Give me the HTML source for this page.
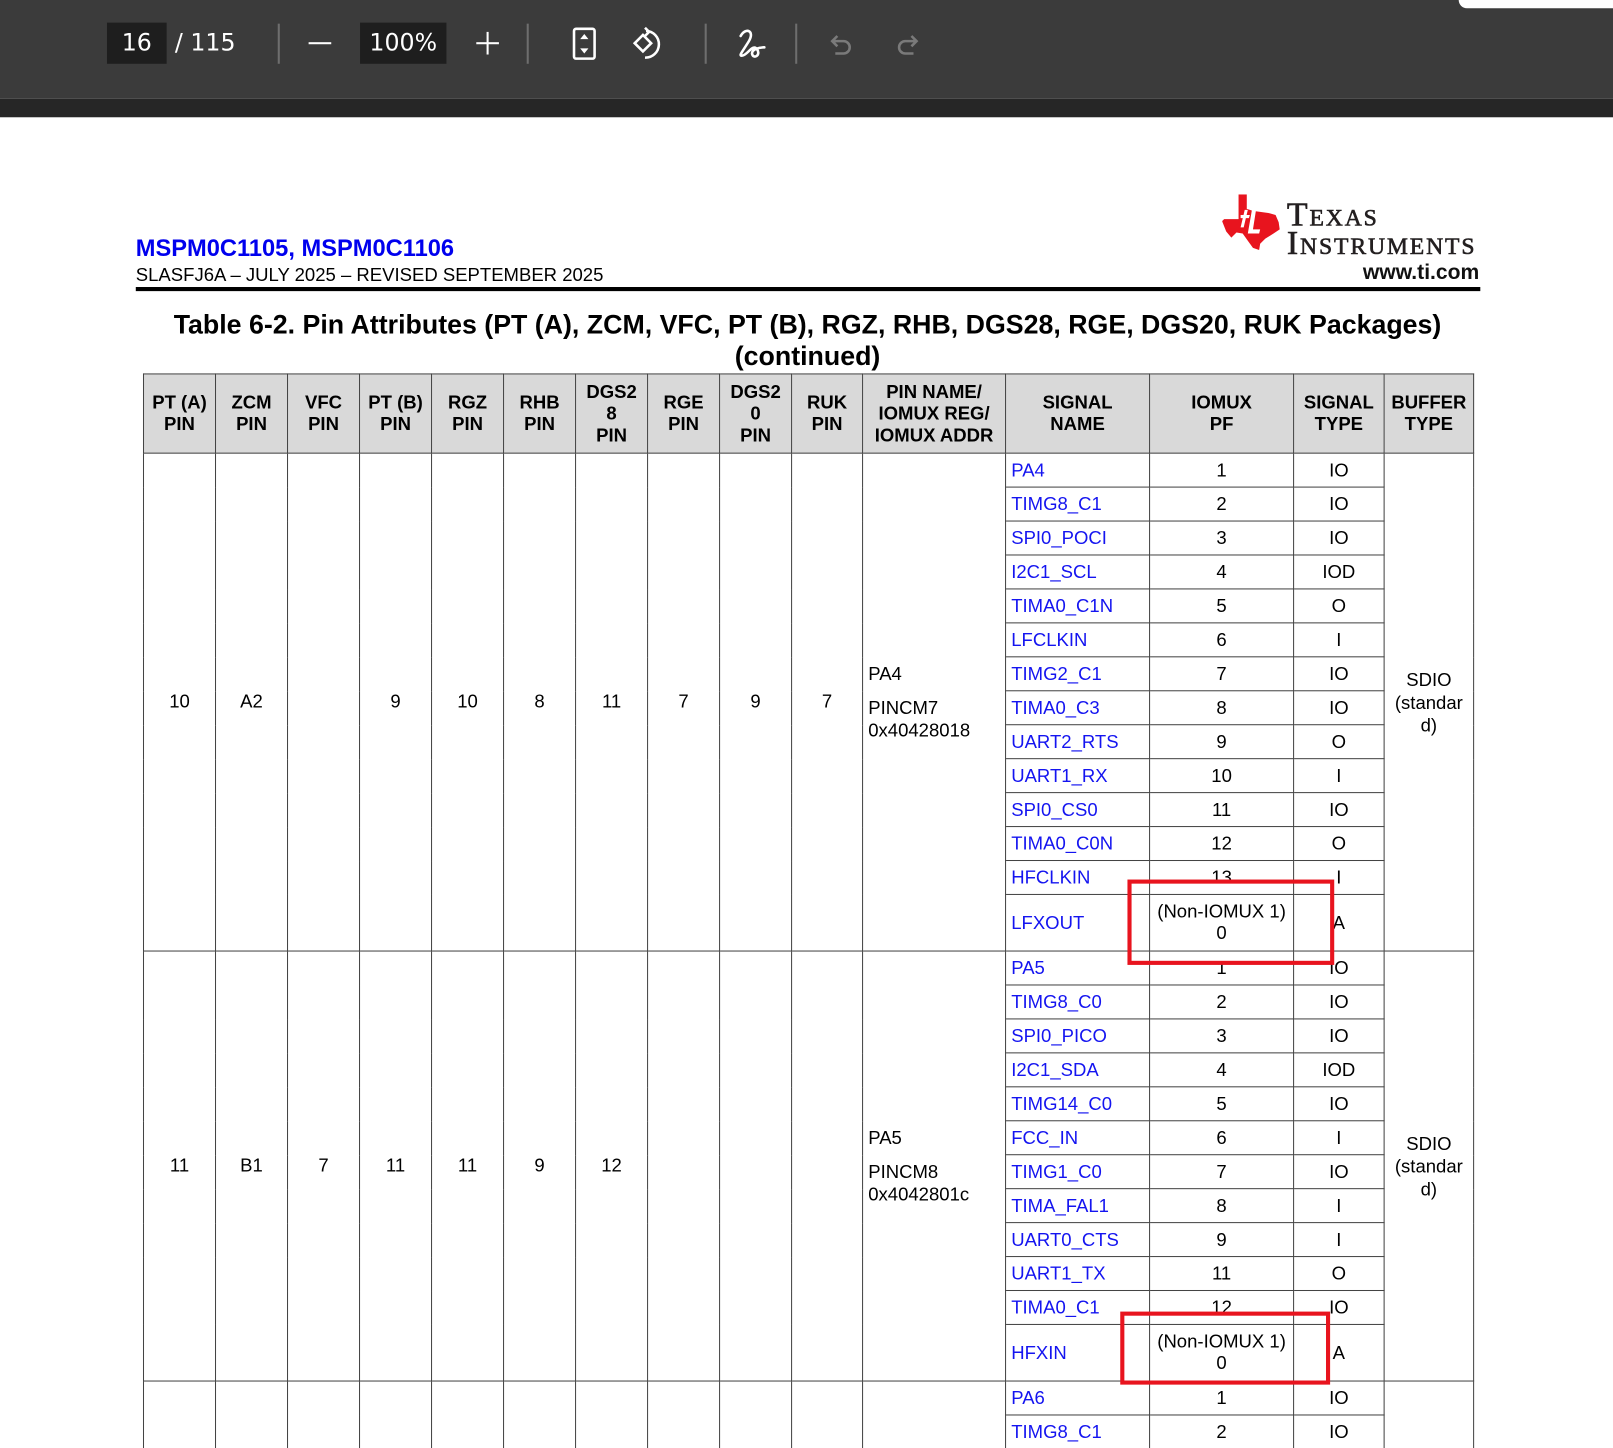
<!DOCTYPE html>
<html><head><meta charset="utf-8">
<style>
html,body{margin:0;padding:0;background:#fff;width:1613px;height:1448px;overflow:hidden}
#w{position:absolute;left:0;top:0;width:1568px;height:1408px;transform:scale(1.02870);transform-origin:0 0;overflow:hidden;font-family:"Liberation Sans",Arial,sans-serif;background:#fff}
.a{position:absolute}
.tb{left:0;top:0;width:1568px;height:96px;background:#3b3b3b}
.tb2{left:0;top:96px;width:1568px;height:18px;background:#262626}
.box{background:#1e1e1e;color:#fff;font-family:"DejaVu Sans",sans-serif;font-size:23px;text-align:center;line-height:40px;top:22px;height:40px}
.sep{width:2px;background:#6e6e6e;top:23px;height:39px}
.tx{color:#fff;font-family:"DejaVu Sans",sans-serif;font-size:23px;line-height:40px;top:22px}
table{position:absolute;left:139px;top:363px;border-collapse:collapse;table-layout:fixed;font-size:18px;color:#000}
td{border:1px solid #444;padding:0;text-align:center;vertical-align:middle;overflow:hidden;white-space:nowrap}
th{border:1px solid #444;background:#d9d9d9;font-weight:bold;font-size:18px;line-height:21px;padding:0}
thead tr{height:77px}
tr.r{height:33px}
tr.t{height:55px}
td.s{text-align:left;padding-left:5px;color:#1414f0}
td.pn{text-align:left;padding-left:5px;line-height:22px}
td.bf{line-height:22px}
.red{border:4px solid #e8141e;box-sizing:border-box}
</style></head><body><div id="w">
<div class="a tb"></div><div class="a tb2"></div>
<div class="a" style="left:1418px;top:0;width:160px;height:8px;background:#fff;border-radius:0 0 0 10px"></div>
<div class="a box" style="left:104px;width:58px">16</div>
<div class="a tx" style="left:170px">/ 115</div>
<div class="a sep" style="left:270px"></div>
<div class="a" style="left:300px;top:41px;width:22px;height:2px;background:#fff"></div>
<div class="a box" style="left:350px;width:84px">100%</div>
<div class="a" style="left:463px;top:41px;width:22px;height:2px;background:#fff"></div>
<div class="a" style="left:473px;top:31px;width:2px;height:22px;background:#fff"></div>
<div class="a sep" style="left:512px"></div>
<svg class="a" style="left:550px;top:20px" width="360" height="46" viewBox="0 0 360 46">
<rect x="8" y="8" width="20" height="29" rx="2" fill="none" stroke="#fff" stroke-width="2.5"/>
<path d="M14 18 L18 13 L22 18 Z M14 27 L18 32 L22 27 Z" fill="#fff"/>
<path d="M67 22 L75 14 L83 22 L75 30 Z" fill="none" stroke="#fff" stroke-width="2.5"/>
<path d="M78 10 A12 12 0 1 1 77 36" fill="none" stroke="#fff" stroke-width="2.5"/>
<path d="M77 7 L81 11 L77 15" fill="none" stroke="#fff" stroke-width="2.5"/>
<rect x="135" y="3" width="2" height="39" fill="#6e6e6e"/>
<path d="M170 15 C175 6 184 10 178 20 C172 30 167 35 172 34 C177 33 182 22 186 28 C190 34 182 38 181 32 C181 28 188 26 193 26" fill="none" stroke="#fff" stroke-width="2.5" stroke-linecap="round"/>
<rect x="223" y="3" width="2" height="39" fill="#6e6e6e"/>
<path d="M260 20 L270 20 A6 6 0 0 1 270 32 L262 32 M264 15 L259 20 L264 25" fill="none" stroke="#7a7a7a" stroke-width="2.5"/>
<path d="M340 20 L330 20 A6 6 0 0 0 330 32 L338 32 M336 15 L341 20 L336 25" fill="none" stroke="#7a7a7a" stroke-width="2.5"/>
</svg>

<svg class="a" style="left:1188px;top:189px" width="57" height="54" viewBox="0 0 57 54">
<path d="M16 0 L24 0 L24 14 L30 16 L37 17 L45 18 L52 20 L55 27 L56 34 L50 38 L42 43 L37 48 L36 54 L30 52 L25 45 L20 38 L14 37 L9 42 L4 36 L0 26 L2 24 L16 24 Z" fill="#e8141e"/>
<path d="M31 8 L35 8 L34 12 L30 12 Z M29 15 L33 15 L30 34 L37 34 L36 38 L25 38 Z M18 20 L27 20 L26 23 L18 23 Z M22 15 L25 15 L21 32 L18 32 Z" fill="#fff"/>
</svg>
<div class="a" style="left:1251px;top:195px;font-family:'Liberation Serif',serif;font-size:33px;line-height:28px;color:#231f20;font-variant:small-caps;letter-spacing:1.8px;-webkit-text-stroke:0.6px #231f20">Texas<br>Instruments</div>
<div class="a" style="left:1280px;top:253px;width:158px;text-align:right;font-weight:bold;font-size:20.5px;color:#111">www.ti.com</div>
<div class="a" style="left:132px;top:228px;font-weight:bold;font-size:23px;color:#0000ee">MSPM0C1105, MSPM0C1106</div>
<div class="a" style="left:132px;top:257px;font-size:18px;color:#000">SLASFJ6A – JULY 2025 – REVISED SEPTEMBER 2025</div>
<div class="a" style="left:132px;top:279px;width:1307px;height:4px;background:#000"></div>
<div class="a" style="left:0;top:300px;width:1570px;text-align:center;font-weight:bold;font-size:26px;line-height:31px;color:#000">Table 6-2. Pin Attributes (PT (A), ZCM, VFC, PT (B), RGZ, RHB, DGS28, RGE, DGS20, RUK Packages)<br>(continued)</div>

<table>
<colgroup><col style="width:70px"><col style="width:70px"><col style="width:70px"><col style="width:70px"><col style="width:70px"><col style="width:70px"><col style="width:70px"><col style="width:70px"><col style="width:70px"><col style="width:69px"><col style="width:139px"><col style="width:140px"><col style="width:140px"><col style="width:88px"><col style="width:87px"></colgroup>
<thead><tr><th>PT (A)<br>PIN</th><th>ZCM<br>PIN</th><th>VFC<br>PIN</th><th>PT (B)<br>PIN</th><th>RGZ<br>PIN</th><th>RHB<br>PIN</th><th>DGS2<br>8<br>PIN</th><th>RGE<br>PIN</th><th>DGS2<br>0<br>PIN</th><th>RUK<br>PIN</th><th>PIN NAME/<br>IOMUX REG/<br>IOMUX ADDR</th><th>SIGNAL<br>NAME</th><th>IOMUX<br>PF</th><th>SIGNAL<br>TYPE</th><th>BUFFER<br>TYPE</th></tr></thead>
<tbody>
<tr class="r"><td rowspan="14">10</td><td rowspan="14">A2</td><td rowspan="14"></td><td rowspan="14">9</td><td rowspan="14">10</td><td rowspan="14">8</td><td rowspan="14">11</td><td rowspan="14">7</td><td rowspan="14">9</td><td rowspan="14">7</td><td rowspan="14" class="pn">PA4<div style="height:11px"></div>PINCM7<br>0x40428018</td><td class="s">PA4</td><td>1</td><td>IO</td><td rowspan="14" class="bf">SDIO<br>(standar<br>d)</td></tr>
<tr class="r"><td class="s">TIMG8_C1</td><td>2</td><td>IO</td></tr>
<tr class="r"><td class="s">SPI0_POCI</td><td>3</td><td>IO</td></tr>
<tr class="r"><td class="s">I2C1_SCL</td><td>4</td><td>IOD</td></tr>
<tr class="r"><td class="s">TIMA0_C1N</td><td>5</td><td>O</td></tr>
<tr class="r"><td class="s">LFCLKIN</td><td>6</td><td>I</td></tr>
<tr class="r"><td class="s">TIMG2_C1</td><td>7</td><td>IO</td></tr>
<tr class="r"><td class="s">TIMA0_C3</td><td>8</td><td>IO</td></tr>
<tr class="r"><td class="s">UART2_RTS</td><td>9</td><td>O</td></tr>
<tr class="r"><td class="s">UART1_RX</td><td>10</td><td>I</td></tr>
<tr class="r"><td class="s">SPI0_CS0</td><td>11</td><td>IO</td></tr>
<tr class="r"><td class="s">TIMA0_C0N</td><td>12</td><td>O</td></tr>
<tr class="r"><td class="s">HFCLKIN</td><td>13</td><td>I</td></tr>
<tr class="t"><td class="s">LFXOUT</td><td style="line-height:21px">(Non-IOMUX 1)<br>0</td><td>A</td></tr>

<tr class="r"><td rowspan="12">11</td><td rowspan="12">B1</td><td rowspan="12">7</td><td rowspan="12">11</td><td rowspan="12">11</td><td rowspan="12">9</td><td rowspan="12">12</td><td rowspan="12"></td><td rowspan="12"></td><td rowspan="12"></td><td rowspan="12" class="pn">PA5<div style="height:11px"></div>PINCM8<br>0x4042801c</td><td class="s">PA5</td><td>1</td><td>IO</td><td rowspan="12" class="bf">SDIO<br>(standar<br>d)</td></tr>
<tr class="r"><td class="s">TIMG8_C0</td><td>2</td><td>IO</td></tr>
<tr class="r"><td class="s">SPI0_PICO</td><td>3</td><td>IO</td></tr>
<tr class="r"><td class="s">I2C1_SDA</td><td>4</td><td>IOD</td></tr>
<tr class="r"><td class="s">TIMG14_C0</td><td>5</td><td>IO</td></tr>
<tr class="r"><td class="s">FCC_IN</td><td>6</td><td>I</td></tr>
<tr class="r"><td class="s">TIMG1_C0</td><td>7</td><td>IO</td></tr>
<tr class="r"><td class="s">TIMA_FAL1</td><td>8</td><td>I</td></tr>
<tr class="r"><td class="s">UART0_CTS</td><td>9</td><td>I</td></tr>
<tr class="r"><td class="s">UART1_TX</td><td>11</td><td>O</td></tr>
<tr class="r"><td class="s">TIMA0_C1</td><td>12</td><td>IO</td></tr>
<tr class="t"><td class="s">HFXIN</td><td style="line-height:21px">(Non-IOMUX 1)<br>0</td><td>A</td></tr>

<tr class="r"><td rowspan="4"></td><td rowspan="4"></td><td rowspan="4"></td><td rowspan="4"></td><td rowspan="4"></td><td rowspan="4"></td><td rowspan="4"></td><td rowspan="4"></td><td rowspan="4"></td><td rowspan="4"></td><td rowspan="4"></td><td class="s">PA6</td><td>1</td><td>IO</td><td rowspan="4"></td></tr>
<tr class="r"><td class="s">TIMG8_C1</td><td>2</td><td>IO</td></tr>
<tr class="r"><td class="s">SPI0_CS1</td><td>3</td><td>IO</td></tr>
<tr class="r"><td class="s">I2C1_SCL</td><td>4</td><td>IOD</td></tr>
</tbody></table>

<div class="a red" style="left:1096px;top:855px;width:201px;height:83px"></div>
<div class="a red" style="left:1089px;top:1275px;width:204px;height:71px"></div>
</div></body></html>
